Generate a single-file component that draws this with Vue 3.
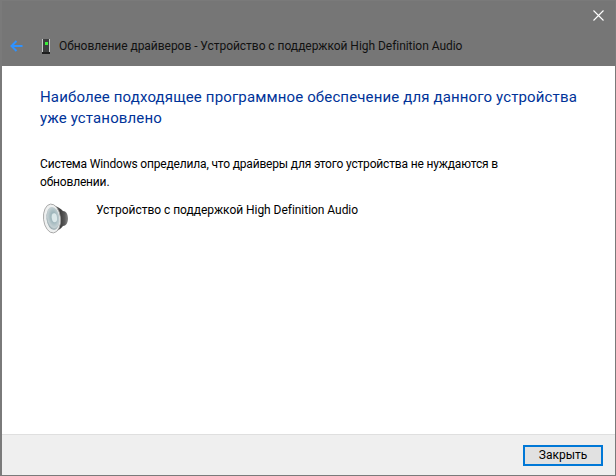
<template>
  <div class="window">
    <header class="head">
      <div class="closeRow">
        <svg class="close" width="11" height="11" viewBox="0 0 11 11"><path d="M.5.5l10 10M10.500.5l-10 10" stroke="#fff" stroke-width="1.100" fill="none"/></svg>
      </div>
      <div class="navRow">
        <svg class="back" width="14" height="12" viewBox="0 0 14 12"><path d="M6.500 1L1.500 6l5 5M1.500 6H12.500" stroke="#2e92ff" stroke-width="2" fill="none"/></svg>
        <svg class="dev" width="9" height="16" viewBox="0 0 9 16">
          <rect x="0" y="1" width="8" height="13" fill="#c4c6c6"/>
          <rect x="1" y="1" width="6" height="13" fill="#3c3e3e"/>
          <rect x="3" y="4" width="3" height="3" fill="#39f039"/>
          <rect x="0" y="14" width="8" height="2" fill="#1e1e1e"/>
        </svg>
        <span class="title">Обновление драйверов - Устройство с поддержкой High Definition Audio</span>
      </div>
    </header>
    <main class="body">
      <h1 class="heading">Наиболее подходящее программное обеспечение для данного устройства<br>уже установлено</h1>
      <p class="msg">Система Windows определила, что драйверы для этого устройства не нуждаются в<br>обновлении.</p>
      <div class="device">
        <svg class="spk" width="26" height="31" viewBox="0 0 26 31">
          <defs>
            <radialGradient id="cone" cx=".55" cy=".45" r=".6"><stop offset="0" stop-color="#c9dade"/><stop offset=".35" stop-color="#9fb6bc"/><stop offset=".75" stop-color="#c4d0d3"/><stop offset="1" stop-color="#7d9198"/></radialGradient>
            <linearGradient id="back" x1="0" y1="0" x2="1" y2="0"><stop offset="0" stop-color="#9a9a9a"/><stop offset=".55" stop-color="#3f3f3f"/><stop offset=".8" stop-color="#5a5a5a"/><stop offset="1" stop-color="#8a8a8a"/></linearGradient>
          </defs>
          <path d="M8 1C14 3 18 6 20 8c3 0 5 3 5 7.500s-2 7.500-5 7.500c-2 3-7 6-12 7z" fill="url(#back)"/>
          <g transform="rotate(-6 9 15.500)">
            <ellipse cx="9" cy="15.500" rx="8.500" ry="14.500" fill="#eef0f0" stroke="#9c9c9c" stroke-width=".8"/>
            <ellipse cx="10" cy="15.500" rx="6.500" ry="11.500" fill="url(#cone)"/>
            <ellipse cx="11.500" cy="15" rx="2.600" ry="4.500" fill="#dbe8ea"/>
          </g>
        </svg>
        <span class="devName">Устройство с поддержкой High Definition Audio</span>
      </div>
    </main>
    <footer class="foot">
      <button class="btn">Закрыть</button>
    </footer>
  </div>
</template>

<script setup>
</script>

<style>
html, body { margin: 0; background: #fff; }
</style>

<style scoped>
.window {
  width: 616px;
  height: 476px;
  box-sizing: border-box;
  border: 1px solid #7a7a7a;
  border-left-width: 2px;
  display: flex;
  flex-direction: column;
  font-family: Roboto, sans-serif;
  font-size: 12px;
  color: #000;
  background: #fff;
}
.head { height: 65px; background: #767676; display: flex; flex-direction: column; }
.closeRow { height: 30px; display: flex; justify-content: flex-end; padding: 9px 11px 0 0; box-sizing: border-box; }
.navRow { display: flex; align-items: center; height: 30px; padding-left: 8px; }
.back { margin-right: 18px; }
.dev { margin-right: 8px; }
.title { color: #111; letter-spacing: -0.04px; }
.body { flex: 1; padding: 21px 38px 0; }
.heading { margin: 0; font-size: 15px; font-weight: 400; line-height: 21px; color: #003399; white-space: nowrap; letter-spacing: 0.14px; }
.msg { margin: 26px 0 0; line-height: 18px; white-space: nowrap; letter-spacing: -0.17px; }
.device { display: flex; align-items: flex-start; margin-top: 10px; }
.spk { margin: 2px 0 0 3px; }
.devName { margin-left: 27px; line-height: 18px; letter-spacing: -0.04px; }
.foot { height: 41px; box-sizing: border-box; background: #efefef; border-top: 1px solid #dfdfdf; display: flex; justify-content: flex-end; align-items: center; padding-right: 12px; }
.btn { width: 80px; height: 21px; box-sizing: border-box; border: 2px solid #0078d7; background: #e1e1e1; font: inherit; color: #000; padding: 0; }
</style>
